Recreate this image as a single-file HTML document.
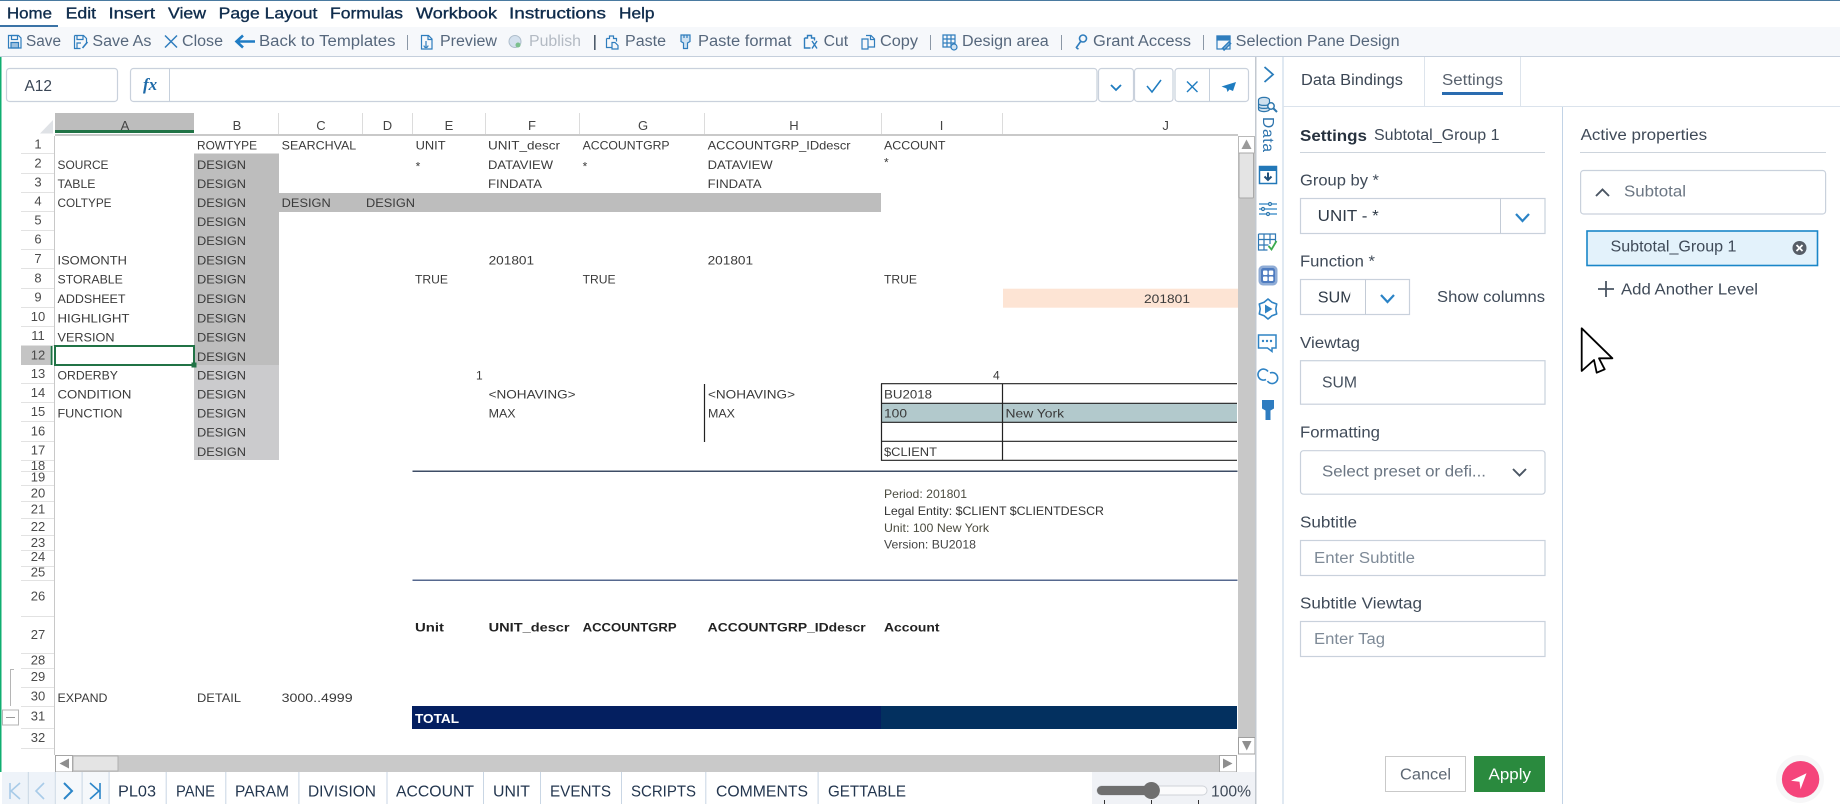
<!DOCTYPE html>
<html lang="en"><head><meta charset="utf-8"><title>Report Designer</title>
<style>
html,body{margin:0;padding:0;background:#fff;width:1840px;height:804px;overflow:hidden}
svg{display:block}
text{font-family:"Liberation Sans",Arial,sans-serif;white-space:pre}
.m{font-size:16px;fill:#0f2c4c;stroke:#0f2c4c;stroke-width:.35px}
.t{font-size:15.5px;fill:#56677c}
.g{font-size:12px;fill:#3a3a3a}
.b{font-size:12px;font-weight:700;fill:#222}
.n{font-size:13px;fill:#4a4a4a;text-anchor:middle}
.c{font-size:13px;fill:#444;text-anchor:middle}
.p{font-size:12px;fill:#4c4c40}
.s{font-size:15.5px;fill:#3f4a58}
.h{font-size:15.5px;fill:#6b7683}
.k{font-size:15.5px;fill:#23364f}
.i{fill:none;stroke:#2f7dbd;stroke-width:1.2}
.l{stroke:#c6d0dc;stroke-width:1;fill:none}
.f{fill:#fff;stroke:#c9d1dc;stroke-width:1.2}
</style></head><body>
<svg xmlns="http://www.w3.org/2000/svg" width="1840" height="804" viewBox="0 0 1840 804">
<rect width="1840" height="804" fill="#fff"/>
<rect width="1840" height="1" fill="#4a7aa0"/>
<!-- menu -->
<rect x="0" y="27" width="1840" height="29" fill="#f6f8fb"/>
<rect x="0" y="56" width="1840" height="1" fill="#c5cfdc"/>
<rect x="0" y="25" width="58" height="2" fill="#3b73a6"/>
<text class="m" x="7" y="18.6" textLength="45" lengthAdjust="spacingAndGlyphs">Home</text>
<text class="m" x="65.6" y="18.6" textLength="30.5" lengthAdjust="spacingAndGlyphs">Edit</text>
<text class="m" x="108.5" y="18.6" textLength="46.5" lengthAdjust="spacingAndGlyphs">Insert</text>
<text class="m" x="168" y="18.6" textLength="38" lengthAdjust="spacingAndGlyphs">View</text>
<text class="m" x="218.7" y="18.6" textLength="98.7" lengthAdjust="spacingAndGlyphs">Page Layout</text>
<text class="m" x="330" y="18.6" textLength="73" lengthAdjust="spacingAndGlyphs">Formulas</text>
<text class="m" x="416" y="18.6" textLength="81" lengthAdjust="spacingAndGlyphs">Workbook</text>
<text class="m" x="509" y="18.6" textLength="97" lengthAdjust="spacingAndGlyphs">Instructions</text>
<text class="m" x="619" y="18.6" textLength="35.5" lengthAdjust="spacingAndGlyphs">Help</text>
<!-- toolbar text -->
<text class="t" x="26" y="46" textLength="35" lengthAdjust="spacingAndGlyphs">Save</text>
<text class="t" x="92.4" y="46" textLength="59" lengthAdjust="spacingAndGlyphs">Save As</text>
<text class="t" x="182" y="46" textLength="41" lengthAdjust="spacingAndGlyphs">Close</text>
<text class="t" x="259" y="46" textLength="136.5" lengthAdjust="spacingAndGlyphs">Back to Templates</text>
<text class="t" x="440" y="46" textLength="57" lengthAdjust="spacingAndGlyphs">Preview</text>
<text class="t" x="529" y="46" textLength="52" lengthAdjust="spacingAndGlyphs" style="fill:#b3bac3">Publish</text>
<text class="t" x="625" y="46" textLength="41" lengthAdjust="spacingAndGlyphs">Paste</text>
<text class="t" x="698" y="46" textLength="93.5" lengthAdjust="spacingAndGlyphs">Paste format</text>
<text class="t" x="823.6" y="46" textLength="24.5" lengthAdjust="spacingAndGlyphs">Cut</text>
<text class="t" x="880" y="46" textLength="38" lengthAdjust="spacingAndGlyphs">Copy</text>
<text class="t" x="962" y="46" textLength="86.7" lengthAdjust="spacingAndGlyphs">Design area</text>
<text class="t" x="1093" y="46" textLength="98" lengthAdjust="spacingAndGlyphs">Grant Access</text>
<text class="t" x="1235.7" y="46" textLength="164" lengthAdjust="spacingAndGlyphs">Selection Pane Design</text>
<g fill="#8b97a6">
<rect x="407" y="35" width="1" height="15"/><rect x="594" y="35" width="1.6" height="15" fill="#4e5b6b"/><rect x="930" y="35" width="1" height="15"/><rect x="1061" y="35" width="1" height="15"/><rect x="1203" y="35" width="1" height="15"/>
</g>
<!-- toolbar icons -->
<g class="i">
<path d="M8.5 35.5h10l2.500 2.500v10h-12.500z"/><rect x="11.500" y="35.500" width="6" height="4"/><rect x="11" y="42.500" width="7.500" height="5.500" fill="#2f7dbd" fill-opacity=".45"/>
<path d="M74.500 35.500h9l3 3v4M74.500 35.500v13h6M77 35.500v4h6v-4M77 48v-5h4"/><path d="M87.500 42l-5 6" stroke-width="1.600"/>
<path d="M165 35.500l12 12M177 35.500l-12 12" stroke-width="1.500"/>
<path d="M255 41.500h-18M243 35.500l-6.500 6 6.500 6" stroke-width="2.600" stroke="#1f7cc4"/>
<path d="M421.500 35.500h7l3.500 3.500v10h-10.500zM428 35.500v4h4M426 41v6M424 45.500a2 2 0 1 0 4 0"/>
<path d="M606.500 38.500h3v-2.500h4v2.500h3v3M606.500 38.500v9h5M612 42.500h3l3 3v3.500h-6z"/>
<path d="M681 35h9v6.500l-2.500 1.500v5.500h-4v-5.500l-2.500-1.500zM684 35v3M687 35v3" fill="#cfe2f2"/>
<path d="M804.500 38h3v-2.500h4v2.500h3v2.500M804.500 38v10h6M812 41l5 7.500M817 41l-5 7.500" stroke-width="1.400"/>
<path d="M862 39h6v10h-6zM866 35.500h5l3.500 3.500v8h-6.500M870.500 35.500v4h4"/>
<path d="M943 35h12v12h-12zM947 35v12M951 35v12M943 39h12M943 43h12"/><circle cx="954" cy="47" r="3" fill="#cfe2f2"/>
<circle cx="1083" cy="38.500" r="3.500" stroke-width="1.600"/><path d="M1081 41l-5 7M1076.500 48l2 1" stroke-width="1.600"/>
<rect x="1217" y="36" width="13" height="13"/><rect x="1217" y="36" width="13" height="4" fill="#2f7dbd"/><path d="M1222 49l7-7 1.500 1.500-7 7" stroke-width="1.600"/>
</g>
<circle cx="515" cy="41.500" r="6" fill="#d4e1ee" stroke="#aebdcb"/><circle cx="518" cy="45" r="2.500" fill="#7cc08e"/>
<!-- formula bar -->
<rect class="f" x="6.500" y="68.500" width="111" height="33" rx="3"/>
<text class="k" x="24.500" y="91" textLength="27.500" lengthAdjust="spacingAndGlyphs" style="fill:#3a4656">A12</text>
<rect class="f" x="130.500" y="68.500" width="966.500" height="33" rx="3"/>
<path class="l" d="M169.500 68.500v33"/>
<text x="143" y="90" style="font-family:'Liberation Serif',serif;font-style:italic;font-weight:700;font-size:17px;fill:#1e6aa8">fx</text>
<rect class="f" x="1098.500" y="68.500" width="35" height="33" rx="3"/>
<rect class="f" x="1134.500" y="68.500" width="38.500" height="33" rx="3"/>
<rect class="f" x="1175" y="68.500" width="73.500" height="33" rx="3"/>
<path class="l" d="M1209.500 68.500v33"/>
<path d="M1111 85l5 5 5-5" fill="none" stroke="#1e7cc0" stroke-width="1.800"/>
<path d="M1147 86l5 6 9-12" fill="none" stroke="#1e7cc0" stroke-width="1.500"/>
<path d="M1187 81.500l10.500 10.500M1197.500 81.500l-10.500 10.500" fill="none" stroke="#1e7cc0" stroke-width="1.400"/>
<path d="M1236 82l-14.500 4.500 5 2 1 3.500 2-2.500 3.500 1.500z" fill="#1e7cc0"/>
<!-- left border -->
<rect x="0" y="57" width="1.500" height="715" fill="#0fae70"/>
<!-- column headers -->
<path d="M40 133.500L53 120v13.500z" fill="#dfe2e6"/>
<rect x="55" y="113" width="139" height="17" fill="#bdbdbd"/>
<rect x="55" y="130" width="139" height="3" fill="#217346"/>
<rect x="55" y="134" width="1183" height="2" fill="#c9c9c9"/>
<g fill="#dcdcdc">
<rect x="278" y="113" width="1" height="21"/><rect x="362" y="113" width="1" height="21"/><rect x="412" y="113" width="1" height="21"/><rect x="485" y="113" width="1" height="21"/><rect x="579" y="113" width="1" height="21"/><rect x="704" y="113" width="1" height="21"/><rect x="881" y="113" width="1" height="21"/><rect x="1002" y="113" width="1" height="21"/>
</g>
<g>
<text class="c" x="125" y="130">A</text><text class="c" x="237" y="130">B</text><text class="c" x="321" y="130">C</text><text class="c" x="387.500" y="130">D</text><text class="c" x="449" y="130">E</text><text class="c" x="532" y="130">F</text><text class="c" x="643" y="130">G</text><text class="c" x="794" y="130">H</text><text class="c" x="941.500" y="130">I</text><text class="c" x="1165.600" y="130">J</text>
</g>
<!-- row header -->
<rect x="54" y="136" width="1" height="619" fill="#c8c8c8"/>
<rect x="21" y="345.500" width="29" height="19.500" fill="#c4c4c4"/>
<rect x="50.500" y="346" width="2" height="19" fill="#217346"/>
<g fill="#e2e2e2">
<rect x="21" y="153" width="33" height="1"/><rect x="21" y="173" width="33" height="1"/><rect x="21" y="192" width="33" height="1"/><rect x="21" y="211" width="33" height="1"/><rect x="21" y="230" width="33" height="1"/><rect x="21" y="249" width="33" height="1"/><rect x="21" y="268" width="33" height="1"/><rect x="21" y="288" width="33" height="1"/><rect x="21" y="307" width="33" height="1"/><rect x="21" y="326" width="33" height="1"/><rect x="21" y="345" width="33" height="1"/><rect x="21" y="383" width="33" height="1"/><rect x="21" y="402" width="33" height="1"/><rect x="21" y="421" width="33" height="1"/><rect x="21" y="441" width="33" height="1"/><rect x="21" y="460" width="33" height="1"/><rect x="21" y="471" width="33" height="1"/><rect x="21" y="485" width="33" height="1"/><rect x="21" y="501" width="33" height="1"/><rect x="21" y="518" width="33" height="1"/><rect x="21" y="535" width="33" height="1"/><rect x="21" y="550" width="33" height="1"/><rect x="21" y="566" width="33" height="1"/><rect x="21" y="580" width="33" height="1"/><rect x="21" y="616" width="33" height="1"/><rect x="21" y="653" width="33" height="1"/><rect x="21" y="668" width="33" height="1"/><rect x="21" y="687" width="33" height="1"/><rect x="21" y="706" width="33" height="1"/><rect x="21" y="728" width="33" height="1"/><rect x="21" y="748" width="33" height="1"/>
</g>
<g>
<text class="n" x="38" y="148.500">1</text><text class="n" x="38" y="167.500">2</text><text class="n" x="38" y="186.500">3</text><text class="n" x="38" y="205.500">4</text><text class="n" x="38" y="224.500">5</text><text class="n" x="38" y="243.500">6</text><text class="n" x="38" y="263">7</text><text class="n" x="38" y="282.500">8</text><text class="n" x="38" y="301.500">9</text><text class="n" x="38" y="321">10</text><text class="n" x="38" y="340">11</text><text class="n" x="38" y="359.500">12</text><text class="n" x="38" y="378">13</text><text class="n" x="38" y="397">14</text><text class="n" x="38" y="416">15</text><text class="n" x="38" y="435.500">16</text><text class="n" x="38" y="454.500">17</text>
<text class="n" x="38" y="470">18</text><text class="n" x="38" y="481.500">19</text><text class="n" x="38" y="497.500">20</text><text class="n" x="38" y="513.500">21</text><text class="n" x="38" y="531">22</text><text class="n" x="38" y="547">23</text><text class="n" x="38" y="561">24</text><text class="n" x="38" y="576.500">25</text><text class="n" x="38" y="600.500">26</text><text class="n" x="38" y="639">27</text><text class="n" x="38" y="664.500">28</text><text class="n" x="38" y="681">29</text><text class="n" x="38" y="700.500">30</text><text class="n" x="38" y="720.500">31</text><text class="n" x="38" y="742">32</text>
</g>
<svg x="21" y="749" width="33" height="6" viewBox="0 0 33 6"><text class="n" x="17" y="15">33</text></svg>
<!-- outline -->
<path d="M14 669.500h-3.500V706" fill="none" stroke="#b5b5b5"/>
<rect x="2.500" y="710" width="16" height="15" fill="#fff" stroke="#b5b5b5"/>
<rect x="6" y="717" width="9" height="1" fill="#999"/>
<!-- fills -->
<rect x="194" y="153.500" width="85" height="211.500" fill="#bdbdbd"/>
<rect x="194" y="365" width="85" height="95" fill="#cbcbcd"/>
<rect x="279" y="193" width="602" height="19" fill="#bdbdbd"/>
<rect x="1003" y="288.700" width="235" height="19" fill="#fde4d4"/>
<rect x="881" y="403" width="356" height="19" fill="#b2c9cc"/>
<!-- selected -->
<rect x="55" y="346" width="139" height="19" fill="#fff" stroke="#217346" stroke-width="2"/>
<rect x="191.500" y="362.500" width="5" height="5" fill="#217346"/>
<!-- cell lines -->
<path d="M704.500 384v58M881 383.700h356M881 403.300h356M881 422.300h356M881 441.300h356M881 460.300h356M881.500 383.700v77M1002.500 383.700v77" stroke="#222" stroke-width="1.200" fill="none"/>
<rect x="412.500" y="470.500" width="825" height="1.500" fill="#3e4d66"/>
<rect x="412.500" y="579.500" width="825" height="1.500" fill="#56688f"/>
<rect x="412" y="706" width="469" height="23" fill="#041f60"/>
<rect x="881" y="706" width="356" height="23" fill="#03305f"/>
<text x="415" y="723" style="font-size:13px;font-weight:700;fill:#fff" textLength="44" lengthAdjust="spacingAndGlyphs">TOTAL</text>
<!-- grid text -->
<g transform="translate(0 -.7)">
<text class="g" x="197" y="150" textLength="60" lengthAdjust="spacingAndGlyphs">ROWTYPE</text><text class="g" x="281.700" y="150" textLength="74.500" lengthAdjust="spacingAndGlyphs">SEARCHVAL</text><text class="g" x="415.600" y="150" textLength="30" lengthAdjust="spacingAndGlyphs">UNIT</text><text class="g" x="488" y="150" textLength="72" lengthAdjust="spacingAndGlyphs">UNIT_descr</text><text class="g" x="582.600" y="150" textLength="87" lengthAdjust="spacingAndGlyphs">ACCOUNTGRP</text><text class="g" x="707.600" y="150" textLength="143" lengthAdjust="spacingAndGlyphs">ACCOUNTGRP_IDdescr</text><text class="g" x="884" y="150" textLength="61.500" lengthAdjust="spacingAndGlyphs">ACCOUNT</text>
<text class="g" x="57.500" y="169.500" textLength="51" lengthAdjust="spacingAndGlyphs">SOURCE</text><text class="g" x="415.600" y="171">*</text><text class="g" x="488" y="169.500" textLength="65" lengthAdjust="spacingAndGlyphs">DATAVIEW</text><text class="g" x="582.600" y="171">*</text><text class="g" x="707.600" y="169.500" textLength="65" lengthAdjust="spacingAndGlyphs">DATAVIEW</text><text class="g" x="884" y="167">*</text>
<text class="g" x="57.500" y="188.500" textLength="38" lengthAdjust="spacingAndGlyphs">TABLE</text><text class="g" x="488" y="188.500" textLength="54" lengthAdjust="spacingAndGlyphs">FINDATA</text><text class="g" x="707.600" y="188.500" textLength="54" lengthAdjust="spacingAndGlyphs">FINDATA</text>
<text class="g" x="57.500" y="207.500" textLength="54" lengthAdjust="spacingAndGlyphs">COLTYPE</text><text class="g" x="281.700" y="207.500" textLength="49" lengthAdjust="spacingAndGlyphs">DESIGN</text><text class="g" x="366" y="207.500" textLength="49" lengthAdjust="spacingAndGlyphs">DESIGN</text>
<text class="g" x="197" y="169.500" textLength="49" lengthAdjust="spacingAndGlyphs">DESIGN</text><text class="g" x="197" y="188.500" textLength="49" lengthAdjust="spacingAndGlyphs">DESIGN</text><text class="g" x="197" y="207.500" textLength="49" lengthAdjust="spacingAndGlyphs">DESIGN</text><text class="g" x="197" y="226.500" textLength="49" lengthAdjust="spacingAndGlyphs">DESIGN</text><text class="g" x="197" y="245.700" textLength="49" lengthAdjust="spacingAndGlyphs">DESIGN</text><text class="g" x="197" y="265" textLength="49" lengthAdjust="spacingAndGlyphs">DESIGN</text><text class="g" x="197" y="284.400" textLength="49" lengthAdjust="spacingAndGlyphs">DESIGN</text><text class="g" x="197" y="303.700" textLength="49" lengthAdjust="spacingAndGlyphs">DESIGN</text><text class="g" x="197" y="323" textLength="49" lengthAdjust="spacingAndGlyphs">DESIGN</text><text class="g" x="197" y="342" textLength="49" lengthAdjust="spacingAndGlyphs">DESIGN</text><text class="g" x="197" y="361.500" textLength="49" lengthAdjust="spacingAndGlyphs">DESIGN</text><text class="g" x="197" y="380" textLength="49" lengthAdjust="spacingAndGlyphs">DESIGN</text><text class="g" x="197" y="399" textLength="49" lengthAdjust="spacingAndGlyphs">DESIGN</text><text class="g" x="197" y="418" textLength="49" lengthAdjust="spacingAndGlyphs">DESIGN</text><text class="g" x="197" y="437.400" textLength="49" lengthAdjust="spacingAndGlyphs">DESIGN</text><text class="g" x="197" y="456.500" textLength="49" lengthAdjust="spacingAndGlyphs">DESIGN</text>
<text class="g" x="57.500" y="265" textLength="69.400" lengthAdjust="spacingAndGlyphs">ISOMONTH</text><text class="g" x="488.600" y="265" textLength="45.500" lengthAdjust="spacingAndGlyphs">201801</text><text class="g" x="707.600" y="265" textLength="45.500" lengthAdjust="spacingAndGlyphs">201801</text>
<text class="g" x="57.500" y="284.400" textLength="65.300" lengthAdjust="spacingAndGlyphs">STORABLE</text><text class="g" x="415" y="284.400" textLength="33" lengthAdjust="spacingAndGlyphs">TRUE</text><text class="g" x="582.600" y="284.400" textLength="33" lengthAdjust="spacingAndGlyphs">TRUE</text><text class="g" x="884" y="284.400" textLength="33" lengthAdjust="spacingAndGlyphs">TRUE</text>
<text class="g" x="57.500" y="303.700" textLength="68" lengthAdjust="spacingAndGlyphs">ADDSHEET</text><text class="g" x="1144" y="303.700" textLength="46" lengthAdjust="spacingAndGlyphs">201801</text>
<text class="g" x="57.500" y="323" textLength="72" lengthAdjust="spacingAndGlyphs">HIGHLIGHT</text>
<text class="g" x="57.500" y="342" textLength="57" lengthAdjust="spacingAndGlyphs">VERSION</text>
<text class="g" x="57.500" y="380" textLength="60.400" lengthAdjust="spacingAndGlyphs">ORDERBY</text><text class="g" x="476" y="380">1</text><text class="g" x="993" y="380">4</text>
<text class="g" x="57.500" y="399" textLength="73.900" lengthAdjust="spacingAndGlyphs">CONDITION</text><text class="g" x="488.600" y="399" textLength="87" lengthAdjust="spacingAndGlyphs">&lt;NOHAVING&gt;</text><text class="g" x="708" y="399" textLength="87" lengthAdjust="spacingAndGlyphs">&lt;NOHAVING&gt;</text><text class="g" x="884" y="399" textLength="48" lengthAdjust="spacingAndGlyphs">BU2018</text>
<text class="g" x="57.500" y="418" textLength="65" lengthAdjust="spacingAndGlyphs">FUNCTION</text><text class="g" x="488.600" y="418" textLength="27" lengthAdjust="spacingAndGlyphs">MAX</text><text class="g" x="708" y="418" textLength="27" lengthAdjust="spacingAndGlyphs">MAX</text><text class="g" x="884" y="418" textLength="23" lengthAdjust="spacingAndGlyphs">100</text><text class="g" x="1005.500" y="418" textLength="58.500" lengthAdjust="spacingAndGlyphs">New York</text>
<text class="g" x="884" y="456.500" textLength="53" lengthAdjust="spacingAndGlyphs">$CLIENT</text>
<text class="g" x="57.500" y="702.500" textLength="50" lengthAdjust="spacingAndGlyphs">EXPAND</text><text class="g" x="197" y="702.500" textLength="44" lengthAdjust="spacingAndGlyphs">DETAIL</text><text class="g" x="281.600" y="702.500" textLength="71" lengthAdjust="spacingAndGlyphs">3000..4999</text>
</g>
<text class="p" x="884" y="498" textLength="83" lengthAdjust="spacingAndGlyphs">Period: 201801</text><text class="p" x="884" y="515" textLength="220" lengthAdjust="spacingAndGlyphs" style="fill:#333">Legal Entity: $CLIENT $CLIENTDESCR</text><text class="p" x="884" y="532" textLength="105" lengthAdjust="spacingAndGlyphs">Unit: 100 New York</text><text class="p" x="884" y="548.700" textLength="92" lengthAdjust="spacingAndGlyphs" style="fill:#444">Version: BU2018</text>
<text class="b" x="415" y="631.700" textLength="29" lengthAdjust="spacingAndGlyphs">Unit</text><text class="b" x="488.600" y="631.700" textLength="81" lengthAdjust="spacingAndGlyphs">UNIT_descr</text><text class="b" x="582.600" y="631.700" textLength="94" lengthAdjust="spacingAndGlyphs">ACCOUNTGRP</text><text class="b" x="707.700" y="631.700" textLength="158" lengthAdjust="spacingAndGlyphs">ACCOUNTGRP_IDdescr</text><text class="b" x="884" y="631.700" textLength="55.500" lengthAdjust="spacingAndGlyphs">Account</text>
<!-- scrollbars -->
<rect x="1238" y="136" width="17" height="601" fill="#c8c8c8"/>
<rect x="1238.500" y="136.500" width="16" height="16.500" fill="#fff" stroke="#b9b9b9"/>
<path d="M1241.500 149l5-9.500 5 9.500z" fill="#9a9a9a"/>
<rect x="1239" y="153" width="14.500" height="45" rx="1" fill="#e4e4e4" stroke="#a9a9a9"/>
<rect x="1238.500" y="737.500" width="16.500" height="16.500" fill="#fff" stroke="#9f9f9f"/>
<path d="M1242 741h9.500l-4.750 9.500z" fill="#8e8e8e"/>
<rect x="55" y="755" width="1182" height="17" fill="#c9c9c9"/>
<rect x="55.500" y="755.500" width="17" height="16.500" fill="#fff" stroke="#a5a5a5"/>
<path d="M69 758.500v10l-9.500-5z" fill="#8e8e8e"/>
<rect x="73" y="756" width="45" height="15" fill="#e4e4e4" stroke="#b0b0b0"/>
<rect x="1219.500" y="755.500" width="17" height="16.500" fill="#fff" stroke="#a5a5a5"/>
<path d="M1223 758.500v10l9.500-5z" fill="#8e8e8e"/>
<!-- sheet tabs -->
<rect x="2" y="772" width="52" height="32" fill="#eef3f9"/>
<rect x="54" y="772" width="55" height="32" fill="#f5f8fb"/>
<g fill="#c9d6e4">
<rect x="27.800" y="772" width="1" height="32"/><rect x="54.700" y="772" width="1" height="32"/><rect x="81.600" y="772" width="1" height="32"/><rect x="108.600" y="772" width="1" height="32"/><rect x="165.700" y="772" width="1" height="32"/><rect x="225.300" y="772" width="1" height="32"/><rect x="298.400" y="772" width="1" height="32"/><rect x="386.500" y="772" width="1" height="32"/><rect x="483" y="772" width="1" height="32"/><rect x="540" y="772" width="1" height="32"/><rect x="621" y="772" width="1" height="32"/><rect x="705.300" y="772" width="1" height="32"/><rect x="817.600" y="772" width="1" height="32"/>
</g>
<g fill="none" stroke-width="1.600">
<path d="M20 783l-9 8 9 8M10 783v16" stroke="#a8cbe8"/>
<path d="M44 783l-8 8 8 8" stroke="#a8cbe8"/>
<path d="M64 783l8 8-8 8" stroke="#2c86c9" stroke-width="2"/>
<path d="M90 783l9 8-9 8M100 783v16" stroke="#2c86c9"/>
</g>
<text class="k" x="118" y="796.700" textLength="38" lengthAdjust="spacingAndGlyphs">PL03</text>
<text class="k" x="176" y="796.700" textLength="39" lengthAdjust="spacingAndGlyphs">PANE</text>
<text class="k" x="235" y="796.700" textLength="54" lengthAdjust="spacingAndGlyphs">PARAM</text>
<text class="k" x="308" y="796.700" textLength="68" lengthAdjust="spacingAndGlyphs">DIVISION</text>
<text class="k" x="396" y="796.700" textLength="78" lengthAdjust="spacingAndGlyphs">ACCOUNT</text>
<text class="k" x="493" y="796.700" textLength="37" lengthAdjust="spacingAndGlyphs">UNIT</text>
<text class="k" x="550" y="796.700" textLength="61" lengthAdjust="spacingAndGlyphs">EVENTS</text>
<text class="k" x="631" y="796.700" textLength="65" lengthAdjust="spacingAndGlyphs">SCRIPTS</text>
<text class="k" x="716" y="796.700" textLength="92" lengthAdjust="spacingAndGlyphs">COMMENTS</text>
<text class="k" x="828" y="796.700" textLength="78" lengthAdjust="spacingAndGlyphs">GETTABLE</text>
<!-- zoom -->
<rect x="1092" y="772" width="163" height="32" fill="#f0f2f6"/>
<rect x="1097" y="786" width="110" height="9" rx="4.500" fill="#fbfbfc" stroke="#cfd3d8"/>
<rect x="1097" y="786" width="54" height="9" rx="4.500" fill="#6f6f6f"/>
<circle cx="1151.400" cy="790.500" r="8.500" fill="#6f6f6f"/>
<g fill="#333"><rect x="1104" y="800" width="1" height="4"/><rect x="1151" y="800" width="1" height="4"/><rect x="1198" y="800" width="1" height="4"/></g>
<text class="k" x="1211" y="796.700" textLength="40" lengthAdjust="spacingAndGlyphs" style="fill:#3f4a58">100%</text>
<!-- sidebar -->
<rect x="1255" y="57" width="1.500" height="747" fill="#c3c9d0"/>
<rect x="1282.500" y="57" width="1" height="747" fill="#c2d3e6"/>
<path d="M1264.500 67l8.500 7.500-8.500 7.500" fill="none" stroke="#2a7dbb" stroke-width="1.800"/>
<g class="i" style="stroke:#2e77ad">
<path d="M1258.500 100c0-3.500 11-3.500 11 0v9c0 3.500-11 3.500-11 0z" fill="#cfe0ee"/><path d="M1258.500 103.500c0 2.500 11 2.500 11 0M1258.500 106.500c0 2.500 11 2.500 11 0"/><circle cx="1271" cy="106" r="3.200" fill="#fff" stroke-width="1.500"/><path d="M1273.500 108.500l3.500 3.500" stroke-width="2"/>
<rect x="1259.500" y="166.500" width="17" height="17" stroke="#2278b8" stroke-width="1.500"/><rect x="1259" y="166" width="18" height="5" fill="#2278b8" stroke="none"/><path d="M1268 172.500v7M1264.500 176.500l3.500 3.500 3.500-3.500" stroke="#1f4f7a" stroke-width="2"/>
<path d="M1259 204h18M1259 209h18M1259 214h18" stroke="#2f83c4"/><circle cx="1270" cy="204" r="1.500" fill="#fff"/><circle cx="1263" cy="209" r="1.500" fill="#fff"/><circle cx="1268" cy="214" r="1.500" fill="#fff"/>
<path d="M1258.500 234h17v9M1258.500 234v16h9M1258.500 239.500h17M1258.500 245h10M1264 234v16M1270 234v10" stroke="#2e78b4"/>
<path d="M1276.700 304L1271.900 302.200 1268 299 1264.100 302.200 1259.300 304 1260.200 309 1259.300 314 1264.100 315.800 1268 319 1271.900 315.800 1276.700 314 1275.800 309z" stroke="#2f83c4" stroke-width="1.600" stroke-linejoin="round"/>
<path d="M1258.500 335h17.500v13h-4v3.500l-4.500-3.500h-9z" stroke="#2f83c4" stroke-width="1.500"/>
<path d="M1268 371.500A5.500 5.500 0 1 0 1266 379.500M1267.500 381A5.500 5.500 0 1 0 1270 373" stroke="#2f83c4" stroke-width="1.600"/>
</g>
<path d="M1276.500 241l-5 8.500-3-3.500" fill="none" stroke="#3cab4f" stroke-width="1.800"/>
<rect x="1258.500" y="265.500" width="19" height="20" rx="4.500" fill="#8facd6"/>
<rect x="1261" y="268" width="14" height="15" rx="2.500" fill="#4f7cc0"/>
<g fill="#fff"><rect x="1263" y="270.500" width="4.500" height="4.500" rx="1"/><rect x="1268.800" y="270.500" width="4.500" height="4.500" rx="1"/><rect x="1263" y="276.500" width="4.500" height="4.500" rx="1"/><rect x="1268.800" y="276.500" width="4.500" height="4.500" rx="1"/></g>
<path d="M1265 304.500l7.500 4.500-7.500 4.500z" fill="#2f83c4"/>
<g fill="#2f83c4"><circle cx="1263" cy="341" r="1.200"/><circle cx="1267" cy="341" r="1.200"/><circle cx="1271" cy="341" r="1.200"/></g>
<path d="M1262 400h12v8.500l-3.500 2v9.500h-5v-9.500l-3.500-2z" fill="#2e7cc0"/>
<text transform="translate(1263 117) rotate(90)" style="font-size:15.500px;fill:#2e74ad" textLength="35" lengthAdjust="spacing">Data</text>
<!-- panel tabs -->
<rect x="1283" y="106" width="557" height="1" fill="#dbe3ec"/>
<path d="M1424.500 57v49M1520.500 57v49" stroke="#dde4ec" fill="none"/>
<text class="s" x="1301" y="85" textLength="102" lengthAdjust="spacingAndGlyphs" style="fill:#3b4654">Data Bindings</text>
<text class="s" x="1442" y="85" textLength="61" lengthAdjust="spacingAndGlyphs" style="fill:#59626e">Settings</text>
<rect x="1442" y="92" width="61" height="3" fill="#2a6cb0"/>
<!-- divider -->
<rect x="1562" y="107" width="1" height="697" fill="#c2d3e6"/>
<!-- left form -->
<text class="s" x="1300" y="141" textLength="67" lengthAdjust="spacingAndGlyphs" style="font-weight:700;fill:#27323f">Settings</text>
<text class="s" x="1374" y="140" textLength="125.500" lengthAdjust="spacingAndGlyphs">Subtotal_Group 1</text>
<rect x="1300" y="152" width="245" height="1" fill="#cdd4dc"/>
<text class="s" x="1300" y="185.700" textLength="79" lengthAdjust="spacingAndGlyphs">Group by *</text>
<rect class="f" x="1300.500" y="198.500" width="244.500" height="35"/>
<path d="M1500.500 198.500v35" stroke="#c3cbd6" fill="none"/>
<text class="s" x="1317.700" y="221" textLength="61" lengthAdjust="spacingAndGlyphs" style="fill:#2f3a47">UNIT - *</text>
<path d="M1516 214l6.500 7 6.500-7" fill="none" stroke="#2a83c6" stroke-width="2.200"/>
<text class="s" x="1300" y="266.300" textLength="75" lengthAdjust="spacingAndGlyphs">Function *</text>
<rect class="f" x="1300.500" y="279.500" width="109" height="35"/>
<path d="M1365.500 279.500v35" stroke="#c3cbd6" fill="none"/>
<svg x="1317.700" y="285" width="32.500" height="25" viewBox="0 0 32.500 25"><text class="s" x="0" y="17.600" textLength="36" lengthAdjust="spacingAndGlyphs" style="fill:#2f3a47">SUM</text></svg>
<path d="M1381 295l6.500 7 6.500-7" fill="none" stroke="#2a83c6" stroke-width="2.200"/>
<text class="s" x="1437" y="302" textLength="108" lengthAdjust="spacingAndGlyphs">Show columns</text>
<text class="s" x="1300" y="348" textLength="60" lengthAdjust="spacingAndGlyphs">Viewtag</text>
<rect class="f" x="1300.500" y="360.700" width="244.500" height="43.500"/>
<text class="s" x="1322" y="387.600" textLength="35" lengthAdjust="spacingAndGlyphs" style="fill:#45505e">SUM</text>
<text class="s" x="1300" y="437.300" textLength="80" lengthAdjust="spacingAndGlyphs">Formatting</text>
<rect class="f" x="1300.500" y="450.700" width="244.500" height="43.500" rx="3"/>
<text class="h" x="1322" y="476.500" textLength="164" lengthAdjust="spacingAndGlyphs">Select preset or defi...</text>
<path d="M1513 469l6.500 6.500 6.500-6.500" fill="none" stroke="#4a5563" stroke-width="1.900"/>
<text class="s" x="1300" y="527.300" textLength="57" lengthAdjust="spacingAndGlyphs">Subtitle</text>
<rect class="f" x="1300.500" y="540.500" width="244.500" height="35"/>
<text class="h" x="1314" y="563" textLength="101" lengthAdjust="spacingAndGlyphs" style="fill:#7e8a97">Enter Subtitle</text>
<text class="s" x="1300" y="608.300" textLength="122" lengthAdjust="spacingAndGlyphs">Subtitle Viewtag</text>
<rect class="f" x="1300.500" y="621.500" width="244.500" height="35"/>
<text class="h" x="1314" y="644" textLength="71" lengthAdjust="spacingAndGlyphs" style="fill:#7e8a97">Enter Tag</text>
<rect x="1385.500" y="756.500" width="80" height="35" fill="#fff" stroke="#c9c9c9"/>
<text class="h" x="1400" y="779.300" textLength="51" lengthAdjust="spacingAndGlyphs" style="fill:#5d6773">Cancel</text>
<rect x="1474" y="756" width="71" height="36" fill="#2a8a3e"/>
<text x="1488.500" y="779.300" textLength="42.500" lengthAdjust="spacingAndGlyphs" style="font-size:15.500px;fill:#fff">Apply</text>
<!-- right -->
<text class="s" x="1580.600" y="140" textLength="126.500" lengthAdjust="spacingAndGlyphs">Active properties</text>
<rect x="1580" y="152" width="246" height="1" fill="#cdd4dc"/>
<rect class="f" x="1580.600" y="170.500" width="245" height="43.500" rx="3"/>
<path d="M1596 196l6.500-6.500 6.500 6.500" fill="none" stroke="#4a5563" stroke-width="1.900"/>
<text class="h" x="1624" y="196.500" textLength="62" lengthAdjust="spacingAndGlyphs">Subtotal</text>
<rect x="1587" y="231" width="230.500" height="34.500" fill="#e3f2fb" stroke="#1a86c8" stroke-width="1.600"/>
<text class="s" x="1610.500" y="251.500" textLength="126" lengthAdjust="spacingAndGlyphs">Subtotal_Group 1</text>
<circle cx="1799.500" cy="248" r="7" fill="#565d66"/>
<path d="M1796.500 245l6 6M1802.500 245l-6 6" stroke="#fff" stroke-width="1.800" fill="none"/>
<path d="M1606 281v16M1598 289h16" stroke="#4a5563" stroke-width="1.800" fill="none"/>
<text class="s" x="1621" y="294.300" textLength="137" lengthAdjust="spacingAndGlyphs">Add Another Level</text>
<!-- cursor -->
<path d="M1581.700 328.300V371l12.300-11 2.700 12.700 8-3.400-5.700-11h13.400z" fill="#fff" stroke="#000" stroke-width="1.800" stroke-linejoin="round"/>
<!-- pink button -->
<circle cx="1800" cy="779" r="24" fill="#f7f7f8"/>
<ellipse cx="1800.600" cy="779.300" rx="18.700" ry="18.300" fill="#f5457b"/>
<path d="M1806.500 773.300l-15.500 7.400 8.500 1 1 7.600z" fill="#fff"/>
</svg>
</body></html>
